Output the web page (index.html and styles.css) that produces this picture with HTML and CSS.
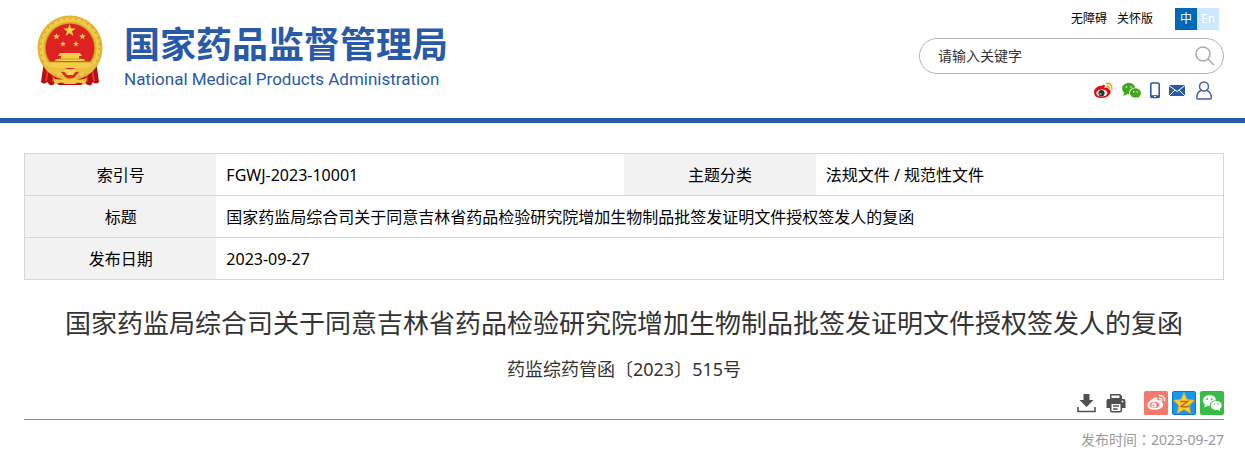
FILE: index.html
```html
<!DOCTYPE html>
<html lang="zh-CN">
<head>
<meta charset="utf-8">
<meta name="viewport" content="width=device-width, initial-scale=1">
<title>国家药品监督管理局</title>
<link rel="stylesheet" href="styles.css">
</head>
<body>
<svg class="defs" aria-hidden="true">
  <symbol id="star" viewBox="-10 -10 20 20"><path d="M0-10 2.4-3.3 9.5-3.1 3.9 1.3 5.9 8.1 0 4.1-5.9 8.1-3.9 1.3-9.5-3.1-2.4-3.3z"/></symbol>
</svg>
<header class="header">
  <a class="brand" href="#">
    <svg class="emblem" viewBox="0 0 68 72" role="img" aria-label="国徽">
      <path d="M8 46 5 67q3 3 6 0l3 3q3 1 5-2l4 2h22l4-2q3 3 6 2l2-3q3 3 6 0L60 46z" fill="#b80d12"/>
      <path d="M12 54 10 66M18 56l-1 11M56 54l2 12M50 56l1 11" stroke="#e43a2b" stroke-width="2" fill="none"/>
      <circle cx="34" cy="33" r="32.500" fill="#e2b32c"/>
      <circle cx="34" cy="33" r="28.500" fill="none" stroke="#f0cb4c" stroke-width="4"/>
      <circle cx="34" cy="33" r="29.500" fill="none" stroke="#d9a526" stroke-width="1.500" stroke-dasharray="2 4"/>
      <circle cx="34" cy="33" r="25" fill="#c99020"/>
      <circle cx="34" cy="33" r="24.300" fill="#dd2222"/>
      <g fill="#f3ce49">
        <use href="#star" x="27" y="9" width="13" height="13"/>
        <use href="#star" x="17" y="18" width="7" height="7"/>
        <use href="#star" x="43" y="18" width="7" height="7"/>
        <use href="#star" x="24" y="26" width="6" height="6"/>
        <use href="#star" x="37" y="26" width="6" height="6"/>
        <path d="M24 38h20l2 3H22zM25 41h18v3H25zM20 44h28l1 2H19zM13 47h42l-2 6H15z"/>
      </g>
      <path d="M23 44h22M14 47h40" stroke="#cf9825" stroke-width="1"/>
      <path d="M8 49q8 4 14 4 6-1 12 2 6-3 12-2 6 0 14-4-2 10-12 10l-7-1-7 6-7-6-7 1Q10 59 8 49z" fill="#eac044"/>
      <path d="M25 57q4-1 9 3 5-4 9-3l-4 5q-5 3-10 0z" fill="#d92b20"/>
      <path d="M28 56q6-4 12 0l-3 4h-6z" fill="#f5d65c"/>
      <path d="M17 63q8 3 13 0l4 2 4-2q5 3 13 0l-2 7q-6-4-10-1H29q-4-3-10 1z" fill="#f2c744"/>
    </svg>
    <span class="brand-text">
      <span class="brand-cn">国家药品监督管理局</span>
      <span class="brand-en">National Medical Products Administration</span>
    </span>
  </a>
  <div class="tools">
    <nav class="top-links">
      <a href="#">无障碍</a>
      <a href="#">关怀版</a>
      <span class="lang"><a class="lang-cn" href="#">中</a><a class="lang-en" href="#">En</a></span>
    </nav>
    <form class="search">
      <input class="search-input" type="text" placeholder="请输入关键字" aria-label="请输入关键字">
      <button class="search-button" type="button" aria-label="搜索">
        <svg width="20" height="20" viewBox="0 0 20 20" fill="none" stroke="#aaa" stroke-width="1.500"><circle cx="8" cy="8" r="7"/><path d="m13 13 6 6"/></svg>
      </button>
    </form>
    <nav class="social">
      <a href="#" aria-label="微博"><svg width="19" height="17" viewBox="0 0 19 17">
        <path d="M7.500 4Q9.500 2 11 3.500L10.500 6q4-1.500 4 1 3 1 2 4-2 5-9 5-7 0-7.500-5-.5-3 2.500-5.500t5-1.500z" fill="#e0101a"/>
        <ellipse cx="7.800" cy="11" rx="5.500" ry="3.600" fill="#fff"/><circle cx="7.500" cy="11.200" r="3.100" fill="#333"/><circle cx="6.500" cy="12" r="1" fill="#999"/>
        <path d="M12 1.500q6-1 6 6M12.500 4.200q3-.4 2.900 3" fill="none" stroke="#eca61c" stroke-width="1.600"/></svg></a>
      <a href="#" aria-label="微信"><svg width="19" height="17" viewBox="0 0 19 17">
        <g fill="#43a51b"><ellipse cx="6.700" cy="6.500" rx="6.600" ry="5.700"/><path d="m2 10-.5 4 4-2z"/></g>
        <ellipse cx="13.200" cy="11" rx="6.200" ry="5.400" fill="#fff"/>
        <g fill="#43a51b"><ellipse cx="13.400" cy="11" rx="5.500" ry="4.700"/><path d="m14.500 14 3 2.500-.5-4z"/></g>
        <g fill="#fff"><circle cx="4.500" cy="5" r=".8"/><circle cx="9" cy="5" r=".8"/><circle cx="11.700" cy="9.700" r=".7"/><circle cx="15.200" cy="9.700" r=".7"/></g></svg></a>
      <a href="#" aria-label="手机"><svg width="10" height="17" viewBox="0 0 10 17"><rect x=".8" y="1" width="8.400" height="14.500" rx="1.300" fill="#fff" stroke="#285aa9" stroke-width="1.600"/><path d="M.8 13.200h8.400V16H.8z" fill="#285aa9"/><path d="M4 14.500h2" stroke="#fff"/></svg></a>
      <a href="#" aria-label="邮箱"><svg width="18" height="17" viewBox="0 0 18 17"><rect y="3" width="16" height="11" fill="#285aa9"/><path d="m0 3.500 8 6 8-6M0 14l6-6M16 14l-6-6" fill="none" stroke="#fff"/></svg></a>
      <a href="#" aria-label="个人中心"><svg width="17" height="19" viewBox="0 0 17 19" fill="none" stroke="#4562ad" stroke-width="1.500"><circle cx="8" cy="5.500" r="4.500"/><path d="M5 9.500Q.8 11 .8 17q0 1 1 1h12.500q1 0 1-1 0-6-4.300-7.500"/></svg></a>
    </nav>
  </div>
</header>
<main class="content">
  <table class="info">
    <tbody>
      <tr><th scope="row">索引号</th><td>FGWJ-2023-10001</td><th scope="row">主题分类</th><td>法规文件 / 规范性文件</td></tr>
      <tr><th scope="row">标题</th><td colspan="3">国家药监局综合司关于同意吉林省药品检验研究院增加生物制品批签发证明文件授权签发人的复函</td></tr>
      <tr><th scope="row">发布日期</th><td colspan="3">2023-09-27</td></tr>
    </tbody>
  </table>
  <h1 class="title">国家药监局综合司关于同意吉林省药品检验研究院增加生物制品批签发证明文件授权签发人的复函</h1>
  <p class="doc-number">药监综药管函〔2023〕515号</p>
  <div class="actions">
    <div class="page-actions">
      <button type="button" aria-label="下载"><svg width="19" height="20" viewBox="0 0 19 20"><path d="M6.500 1h6v6h4l-7 7-7-7h4z" fill="#505050"/><path d="M1 14v4.500h17V14" fill="none" stroke="#505050" stroke-width="1.600"/></svg></button>
      <button type="button" aria-label="打印"><svg width="20" height="20" viewBox="0 0 20 20"><path d="M4 1h10l2 2v3H4z" fill="#505050"/><path d="M5.500 5V2.500h8V5" fill="#fff"/><path d="M2 6h16q1.500 0 1.500 2v7H.5V8Q.5 6 2 6z" fill="#505050"/><rect x="4.700" y="10.200" width="10.600" height="8.600" rx="1" fill="#fff" stroke="#505050" stroke-width="1.600"/><path d="M7 13h6M7 16h4.500" stroke="#505050" stroke-width="1.300"/><circle cx="16.500" cy="8.500" r=".9" fill="#fff"/></svg></button>
    </div>
    <div class="share">
      <a href="#" aria-label="分享到微博"><svg width="24" height="24" viewBox="0 0 24 24"><rect width="24" height="24" rx="1.500" fill="#f5786c"/><path d="M10 7q3-2 3.500 1l-.2 1.500q5-1 4.500 2 2.500 1 1 4-2 3-8 3.200-7 0-7.500-4Q3 11 10 7z" fill="#fff"/><ellipse cx="10.500" cy="14" rx="5" ry="3.300" fill="#f5786c"/><circle cx="10" cy="14" r="2.600" fill="#fff"/><circle cx="9.500" cy="14.400" r="1" fill="#f5786c"/><path d="M15 4.500q6-.5 5.700 6M15 7.500q3-.4 2.800 2.500" fill="none" stroke="#fff" stroke-width="1.500"/></svg></a>
      <a href="#" aria-label="分享到QQ空间"><svg width="24" height="24" viewBox="0 0 24 24"><rect x=".5" y=".5" width="23" height="23" rx="1.500" fill="#1597f2" stroke="#0877cf"/><path d="m12 1.500 3 7 7.500.8-5.300 5 1.400 8L12 18.500l-6.600 3.800 1.400-8-5.300-5L9 8.500z" fill="#ffce22" stroke="#f8a51b" stroke-width=".7"/><path d="M8 10.500h7.500L9 15.500q4 1 8-.2" fill="none" stroke="#c8660b" stroke-width="1.500"/></svg></a>
      <a href="#" aria-label="分享到微信"><svg width="24" height="24" viewBox="0 0 24 24"><rect width="24" height="24" rx="2" fill="#37bd43"/><g fill="#fff"><ellipse cx="9.500" cy="9.500" rx="6.500" ry="5.500"/><path d="m5 13-.7 3.500L8 14.500z"/></g><ellipse cx="16" cy="14.500" rx="6.400" ry="5.300" fill="#37bd43"/><g fill="#fff"><ellipse cx="16.200" cy="14.500" rx="5.500" ry="4.600"/><path d="m17 18 3 2.200-.5-4z"/></g><g fill="#37bd43"><circle cx="7.200" cy="8" r=".9"/><circle cx="11.700" cy="8" r=".9"/><circle cx="14.300" cy="13" r=".8"/><circle cx="18" cy="13" r=".8"/></g></svg></a>
    </div>
  </div>
  <p class="published">发布时间<span class="colon" lang="zh-TW">：</span>2023-09-27</p>
</main>
</body>
</html>
```
FILE: styles.css
```css
* { box-sizing: border-box; }
body {
  margin: 0;
  background: #fff;
  color: #000;
  font-family: "Noto Sans", "Noto Sans CJK SC", sans-serif;
  font-size: 16px;
}
a { color: inherit; text-decoration: none; }
svg { display: block; }
button { padding: 0; border: 0; background: none; cursor: pointer; }
.defs { display: none; }

.header {
  display: flex;
  justify-content: space-between;
  align-items: flex-start;
  padding: 8px 21px 18px 36px;
  border-bottom: 5px solid #285aa9;
}
.brand { display: flex; gap: 20px; padding-top: 7px; color: #285aa9; }
.emblem { width: 68px; height: 72px; }
.brand-text { display: flex; flex-direction: column; white-space: nowrap; }
.brand-cn { font: 700 36px/54px "Noto Sans CJK SC", sans-serif; }
.brand-en { font: 400 17px/20px Roboto, sans-serif; }

.tools { display: flex; flex-direction: column; width: 305px; }
.top-links {
  display: flex;
  justify-content: flex-end;
  gap: 10px;
  padding-right: 5px;
  font-size: 12px;
  line-height: 22px;
}
.lang { display: flex; margin-left: 12px; color: #fff; text-align: center; }
.lang a { width: 22px; }
.lang-cn { background: #0068b7; }
.lang-en { background: #cce8ff; }
.search {
  display: flex;
  align-items: center;
  height: 36px;
  margin-top: 8px;
  padding: 0 8px 0 18px;
  border: 1px solid #b3b3b3;
  border-radius: 18px;
}
.search-input {
  flex: 1;
  min-width: 0;
  padding: 0;
  border: 0;
  outline: 0;
  background: none;
  font: 14px/20px "Noto Sans", "Noto Sans CJK SC", sans-serif;
}
.search-input::placeholder { color: #333; opacity: 1; }
.social {
  display: flex;
  justify-content: flex-end;
  align-items: center;
  gap: 9px;
  margin-top: 7px;
  padding-right: 11px;
}

.content { padding: 30px 21px 10px 24px; }
.info { width: 100%; border: 1px solid #d6d6d6; border-collapse: collapse; table-layout: fixed; line-height: 24px; }
.info tr { border-bottom: 1px solid #d6d6d6; }
.info th { width: 16%; padding: 9px 10px 8px; background: #f2f2f2; font-weight: 400; text-align: center; }
.info td { padding: 9px 10px 8px; }
.title { margin: 23px 0 0; color: #333; font-size: 26px; font-weight: 400; line-height: 40px; text-align: center; }
.doc-number { margin: 12px 0 0; color: #333; font-size: 18px; line-height: 28px; text-align: center; }
.actions {
  display: flex;
  justify-content: flex-end;
  align-items: center;
  gap: 18px;
  margin-top: 8px;
  padding-bottom: 4px;
  border-bottom: 1px solid #888;
}
.page-actions { display: flex; gap: 10px; }
.share { display: flex; gap: 4px; }
.published { margin: 8px 0 0; color: #999; font-size: 14px; line-height: 22px; text-align: right; }
.colon { font-family: "Noto Sans CJK TC", sans-serif; }
```
